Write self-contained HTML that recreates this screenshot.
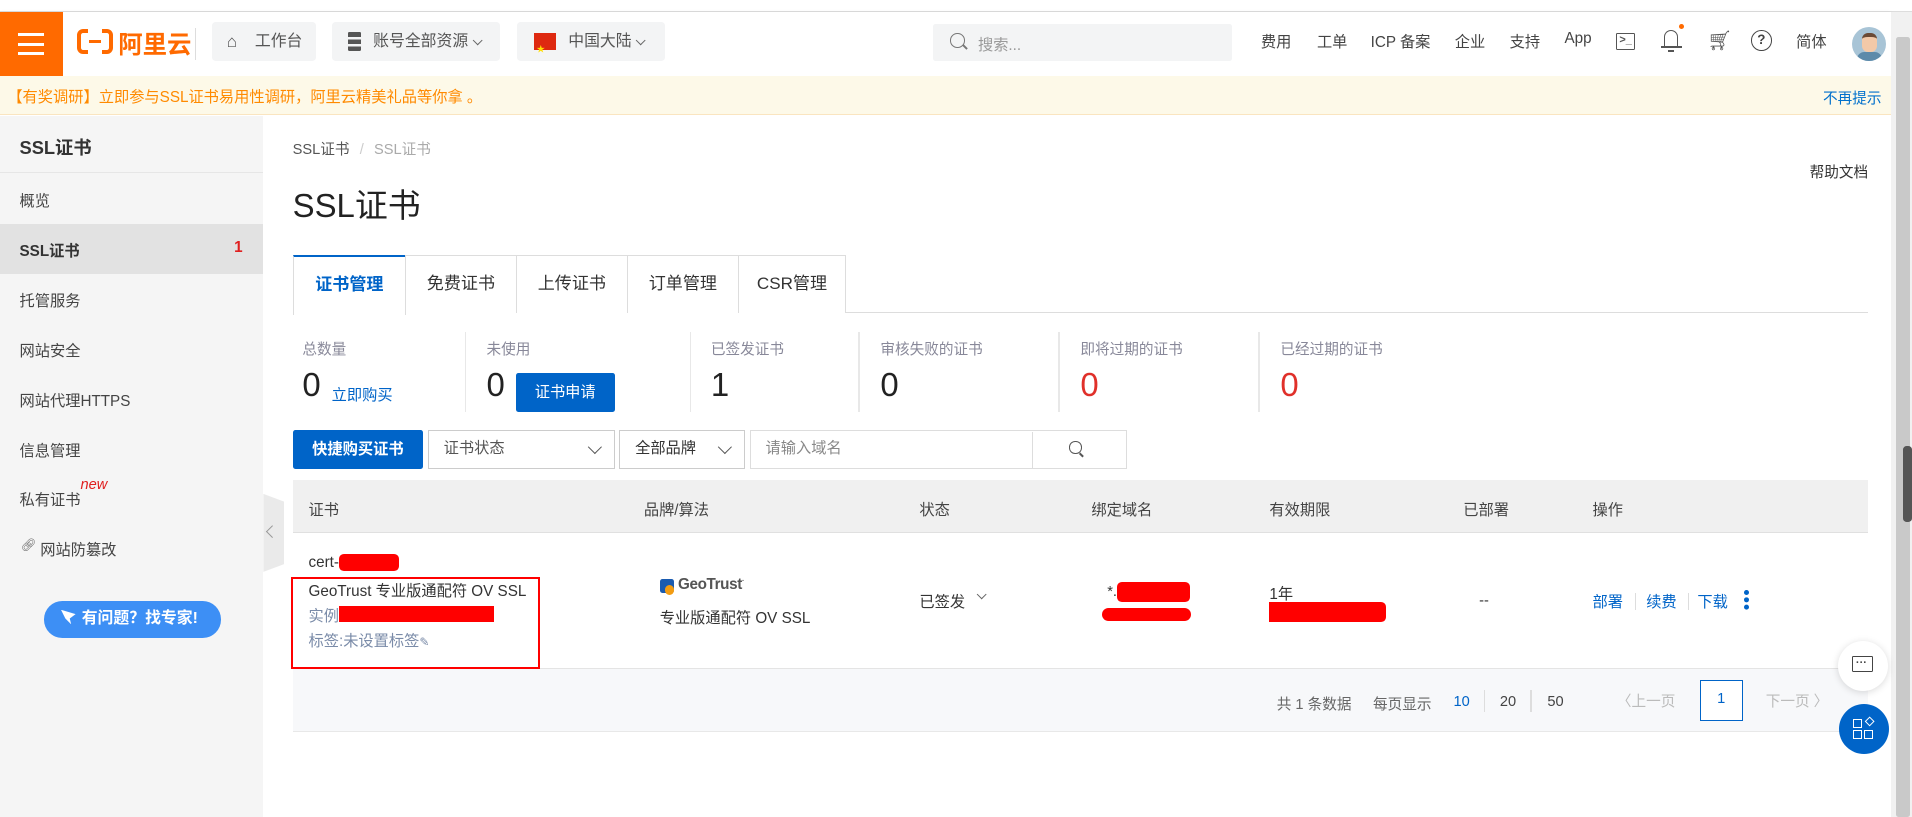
<!DOCTYPE html>
<html><head><meta charset="utf-8"><style>
*{margin:0;padding:0;box-sizing:border-box}
html,body{width:1912px;height:817px;overflow:hidden;background:#fff}
#r{position:relative;width:1568px;height:670px;zoom:1.2194;font-family:"Liberation Sans","Noto Sans CJK SC",sans-serif;color:#333;font-size:12px}
.a{position:absolute;white-space:nowrap}
.hb{position:absolute;top:18px;height:32px;background:#f3f4f5;border-radius:3px;font-size:13px;color:#555;line-height:32px}
.nav{position:absolute;top:25px;font-size:12.5px;color:#444}
.si{position:absolute;left:16px;font-size:12.5px;color:#444}
.tab{position:absolute;top:209px;height:48px;border:1px solid #ddd;border-bottom:none;font-size:14px;line-height:46px;text-align:center;color:#333;background:#fff}
.sl{position:absolute;top:277px;font-size:12px;color:#889}
.sn{position:absolute;top:300px;font-size:27px;color:#222}
.dv{position:absolute;top:272px;width:1px;height:66px;background:#e8e8e8}
.th{position:absolute;top:408px;font-size:12.5px;color:#444}
.red{position:absolute;background:#f00;border-radius:4px}
.sel{position:absolute;top:353px;height:32px;border:1px solid #ccc;font-size:12.5px;line-height:30px;color:#555;padding-left:12px}
.chev{position:absolute;width:8px;height:8px;border-right:1.3px solid #555;border-bottom:1.3px solid #555;transform:rotate(45deg)}
.chs{position:absolute;width:6px;height:6px;border-right:1.2px solid #666;border-bottom:1.2px solid #666;transform:rotate(45deg)}
</style></head><body><div id="r">
<div class="a" style="left:0;top:0;width:1568px;height:10px;background:#fff;border-bottom:1px solid #ddd"></div>
<div class="a" style="left:0;top:10px;width:1551px;height:52px;background:#fff;box-shadow:0 1px 3px rgba(0,0,0,.1)"></div>
<div class="a" style="left:0;top:10px;width:52px;height:52px;background:#ff6a00">
 <div class="a" style="left:15px;top:17px;width:21px;height:2.5px;background:#fff"></div>
 <div class="a" style="left:15px;top:25px;width:21px;height:2.5px;background:#fff"></div>
 <div class="a" style="left:15px;top:33px;width:21px;height:2.5px;background:#fff"></div>
</div>
<div class="a" style="left:63px;top:24px;width:30px;height:20px;border:4px solid #ff6a00;border-radius:5px"></div>
<div class="a" style="left:72px;top:22px;width:12px;height:24px;background:#fff"></div>
<div class="a" style="left:73px;top:32.5px;width:10px;height:3px;background:#ff6a00"></div>
<div class="a" style="left:97px;top:21px;font-size:20px;font-weight:bold;color:#ff6a00">阿里云</div>
<div class="a" style="left:160px;top:23px;width:1px;height:26px;background:#ddd"></div>
<div class="hb" style="left:174px;width:85px"><span style="position:absolute;left:12px;font-size:14px">⌂</span><span style="position:absolute;left:35px">工作台</span></div>
<div class="hb" style="left:272px;width:138px"><span style="position:absolute;left:13px;top:8px;width:11px;height:16px;background:repeating-linear-gradient(#555 0 4px,#f3f4f5 4px 6px);border-radius:1px"></span><span style="position:absolute;left:34px">账号全部资源</span><span class="chs" style="left:117px;top:12px"></span></div>
<div class="hb" style="left:424px;width:121px"><span style="position:absolute;left:14px;top:9px;width:18px;height:14px;background:#de2910"></span><span style="position:absolute;left:16px;top:7px;color:#ffde00;font-size:7px">★</span><span style="position:absolute;left:42px">中国大陆</span><span class="chs" style="left:98px;top:12px"></span></div>
<div class="a" style="left:765px;top:20px;width:245px;height:30px;background:#f3f4f5;border-radius:2px"></div>
<div class="a" style="left:779px;top:27px;width:12px;height:12px;border:1.5px solid #777;border-radius:50%"></div>
<div class="a" style="left:789px;top:38px;width:5px;height:1.5px;background:#777;transform:rotate(45deg)"></div>
<div class="a" style="left:802px;top:27px;font-size:12.5px;color:#999">搜索...</div>
<div class="nav" style="left:1034px">费用</div>
<div class="nav" style="left:1080px">工单</div>
<div class="nav" style="left:1124px">ICP 备案</div>
<div class="nav" style="left:1193px">企业</div>
<div class="nav" style="left:1238px">支持</div>
<div class="nav" style="left:1283px">App</div>
<div class="a" style="left:1325px;top:27px;width:16px;height:14px;border:1.5px solid #555;border-radius:1px"></div>
<div class="a" style="left:1328px;top:28px;font-size:9px;color:#555;font-weight:bold">&gt;_</div>
<div class="a" style="left:1365px;top:25px;width:11px;height:14px;border:1.5px solid #555;border-bottom:none;border-radius:6px 6px 0 0"></div>
<div class="a" style="left:1362px;top:38px;width:17px;height:1.5px;background:#555"></div>
<div class="a" style="left:1368px;top:41px;width:5px;height:2px;background:#555"></div>
<div class="a" style="left:1377px;top:20px;width:4px;height:4px;border-radius:50%;background:#ff6a00"></div>
<div class="a" style="left:1400px;top:24px;font-size:16px;color:#555">🛒︎</div>
<div class="a" style="left:1436px;top:25px;width:17px;height:17px;border:1.6px solid #444;border-radius:50%;text-align:center;font-size:11px;line-height:14px;font-weight:bold;color:#444">?</div>
<div class="nav" style="left:1473px">简体</div>
<div class="a" style="left:1519px;top:22px;width:28px;height:28px;border-radius:50%;background:#a8c4d6;overflow:hidden"><div class="a" style="left:8px;top:5px;width:12px;height:16px;background:#f3c9a8;border-radius:5px;border-top:4px solid #6b4a35"></div><div class="a" style="left:4px;top:21px;width:20px;height:8px;background:#5c8aaa;border-radius:6px 6px 0 0"></div></div>
<div class="a" style="left:0;top:62px;width:1551px;height:32px;background:#fdf9e8;border-bottom:1px solid #fae5c0"></div>
<div class="a" style="left:6px;top:70px;font-size:12.5px;color:#ff8a00">【有奖调研】立即参与SSL证书易用性调研，阿里云精美礼品等你拿 。</div>
<div class="a" style="left:1495px;top:71px;font-size:12px;color:#0070cc">不再提示</div>
<div class="a" style="left:1551px;top:10px;width:17px;height:660px;background:#f1f1f1"></div>
<div class="a" style="left:1555px;top:30px;width:11px;height:640px;background:#c9c9c9;border-radius:2px"></div>
<div class="a" style="left:1561px;top:366px;width:7px;height:62px;background:#555;border-radius:3px"></div>
<div class="a" style="left:0;top:95px;width:216px;height:575px;background:#f5f5f5"></div>
<div class="a" style="left:16px;top:110px;font-size:15px;font-weight:bold;color:#333">SSL证书</div>
<div class="a" style="left:0;top:141px;width:216px;height:1px;background:#e6e6e6"></div>
<div class="si" style="top:155px">概览</div>
<div class="a" style="left:0;top:184px;width:216px;height:41px;background:#e2e2e2"></div>
<div class="si" style="top:196px;font-weight:bold;color:#333">SSL证书</div>
<div class="a" style="left:192px;top:196px;color:#e02020;font-weight:bold;font-size:12.5px">1</div>
<div class="si" style="top:237px">托管服务</div>
<div class="si" style="top:278px">网站安全</div>
<div class="si" style="top:319px">网站代理HTTPS</div>
<div class="si" style="top:360px">信息管理</div>
<div class="si" style="top:400px">私有证书</div>
<div class="a" style="left:66px;top:391px;font-size:12px;color:#e02020;font-style:italic">new</div>
<div class="si" style="top:441px;font-size:10px;left:17px;color:#666">🔗︎</div>
<div class="si" style="top:441px;left:33px">网站防篡改</div>
<div class="a" style="left:36px;top:493px;width:145px;height:30px;border-radius:15px;background:#3d8ff5;color:#fff;font-size:13px;line-height:30px;padding-left:31px;font-weight:bold">有问题？找专家!</div>
<div class="a" style="left:50px;top:500px;width:12px;height:12px;background:#fff;clip-path:polygon(0 0,100% 30%,60% 60%,70% 100%,30% 60%)"></div>
<div class="a" style="left:216px;top:405px;width:17px;height:64px;background:#eaeaea;clip-path:polygon(0 0,100% 10%,100% 90%,0 100%)"></div>
<div class="a" style="left:220px;top:432px;width:7px;height:7px;border-left:1.3px solid #999;border-bottom:1.3px solid #999;transform:rotate(45deg)"></div>
<div class="a" style="left:240px;top:113px;font-size:12px;color:#555">SSL证书 <span style="color:#ccc;margin:0 5px">/</span> <span style="color:#aaa">SSL证书</span></div>
<div class="a" style="left:1484px;top:132px;font-size:12px;color:#333">帮助文档</div>
<div class="a" style="left:240px;top:148px;font-size:27px;color:#222">SSL证书</div>
<div class="a" style="left:240px;top:256px;width:1292px;height:1px;background:#ddd"></div>
<div class="tab" style="left:240px;width:93px;border-top:2px solid #0064c8;color:#0064c8;font-weight:bold;height:49px">证书管理</div>
<div class="tab" style="left:332px;width:92px">免费证书</div>
<div class="tab" style="left:423px;width:92px">上传证书</div>
<div class="tab" style="left:514px;width:92px">订单管理</div>
<div class="tab" style="left:605px;width:89px">CSR管理</div>
<div class="sl" style="left:248px">总数量</div><div class="sn" style="left:248px">0</div>
<div class="a" style="left:272px;top:314px;font-size:12.5px;color:#0064c8">立即购买</div>
<div class="dv" style="left:381px"></div>
<div class="sl" style="left:399px">未使用</div><div class="sn" style="left:399px">0</div>
<div class="a" style="left:423px;top:306px;width:81px;height:32px;background:#0064c8;border-radius:2px;color:#fff;font-size:12.5px;line-height:32px;text-align:center">证书申请</div>
<div class="dv" style="left:566px"></div>
<div class="sl" style="left:583px">已签发证书</div><div class="sn" style="left:583px">1</div>
<div class="dv" style="left:704px"></div>
<div class="sl" style="left:722px">审核失败的证书</div><div class="sn" style="left:722px">0</div>
<div class="dv" style="left:868px"></div>
<div class="sl" style="left:886px">即将过期的证书</div><div class="sn" style="left:886px;color:#e0302a">0</div>
<div class="dv" style="left:1032px"></div>
<div class="sl" style="left:1050px">已经过期的证书</div><div class="sn" style="left:1050px;color:#e0302a">0</div>
<div class="a" style="left:240px;top:353px;width:107px;height:32px;background:#0064c8;border-radius:2px;color:#fff;font-size:12.5px;line-height:32px;text-align:center;font-weight:bold">快捷购买证书</div>
<div class="sel" style="left:351px;width:153px">证书状态<span class="chev" style="left:132px;top:9px"></span></div>
<div class="sel" style="left:508px;width:103px;color:#333">全部品牌<span class="chev" style="left:82px;top:9px"></span></div>
<div class="sel" style="left:615px;width:309px;border-color:#ddd;color:#888">请输入域名</div>
<div class="a" style="left:846px;top:354px;width:1px;height:30px;background:#ddd"></div>
<div class="a" style="left:877px;top:362px;width:10px;height:10px;border:1.4px solid #555;border-radius:50%"></div>
<div class="a" style="left:885px;top:372px;width:4px;height:1.4px;background:#555;transform:rotate(45deg)"></div>
<div class="a" style="left:240px;top:394px;width:1292px;height:43px;background:#f0f0f0;border-bottom:1px solid #e0e0e0"></div>
<div class="th" style="left:253px">证书</div>
<div class="th" style="left:528px">品牌/算法</div>
<div class="th" style="left:754px">状态</div>
<div class="th" style="left:895px">绑定域名</div>
<div class="th" style="left:1041px">有效期限</div>
<div class="th" style="left:1200px">已部署</div>
<div class="th" style="left:1306px">操作</div>
<div class="a" style="left:240px;top:548px;width:1292px;height:52px;background:#f7f8fa;border-top:1px solid #e4e4e4;border-bottom:1px solid #e8e8e8"></div>
<div class="a" style="left:253px;top:454px;font-size:12.5px;color:#333">cert-</div>
<div class="red" style="left:278px;top:454px;width:49px;height:14px"></div>
<div class="a" style="left:253px;top:475px;font-size:12.5px;color:#333">GeoTrust 专业版通配符 OV SSL</div>
<div class="a" style="left:253px;top:495px;font-size:12.5px;color:#7a8ba8">实例</div>
<div class="a" style="left:278px;top:497px;width:127px;height:13px;background:#f00"></div>
<div class="a" style="left:253px;top:516px;font-size:12.5px;color:#7a8ba8">标签:未设置标签<span style="font-size:10px">✎</span></div>
<div class="a" style="left:239px;top:473px;width:204px;height:76px;border:2px solid #f00"></div>
<div class="a" style="left:541px;top:475px;width:12px;height:11px;background:#1a5bb0;border-radius:2px"></div>
<div class="a" style="left:545px;top:480px;width:8px;height:8px;border-radius:50%;background:#f39c12"></div>
<div class="a" style="left:556px;top:472px;font-size:12.5px;color:#555;font-weight:bold;letter-spacing:-.3px">GeoTrust<span style="font-size:6px;vertical-align:top">·</span></div>
<div class="a" style="left:541px;top:497px;font-size:12.5px;color:#333">专业版通配符 OV SSL</div>
<div class="a" style="left:754px;top:484px;font-size:12.5px;color:#333">已签发</div>
<div class="chev" style="left:802px;top:485px;width:6px;height:6px;border-color:#666"></div>
<div class="a" style="left:908px;top:479px;font-size:12px">*.</div>
<div class="red" style="left:916px;top:477px;width:60px;height:17px"></div>
<div class="red" style="left:904px;top:499px;width:73px;height:10px;border-radius:6px"></div>
<div class="a" style="left:1041px;top:477px;font-size:12.5px;color:#333">1年</div>
<div class="red" style="left:1041px;top:494px;width:96px;height:16px;border-radius:0 4px 4px 0"></div>
<div class="a" style="left:1213px;top:486px;font-size:12px;color:#333">--</div>
<div class="a" style="left:1306px;top:484px;font-size:12.5px;color:#0064c8">部署</div>
<div class="a" style="left:1341px;top:486px;width:1px;height:14px;background:#ddd"></div>
<div class="a" style="left:1350px;top:484px;font-size:12.5px;color:#0064c8">续费</div>
<div class="a" style="left:1384px;top:486px;width:1px;height:14px;background:#ddd"></div>
<div class="a" style="left:1392px;top:484px;font-size:12.5px;color:#0064c8">下载</div>
<div class="a" style="left:1430px;top:484px;width:4px;height:4px;border-radius:50%;background:#0064c8;box-shadow:0 6px 0 #0064c8,0 12px 0 #0064c8"></div>
<div class="a" style="left:1047px;top:568px;font-size:12px;color:#666">共 1 条数据</div>
<div class="a" style="left:1126px;top:568px;font-size:12px;color:#666">每页显示</div>
<div class="a" style="left:1192px;top:569px;font-size:12px;color:#0064c8">10</div>
<div class="a" style="left:1217px;top:566px;width:1px;height:18px;background:#ddd"></div>
<div class="a" style="left:1230px;top:569px;font-size:12px;color:#444">20</div>
<div class="a" style="left:1255px;top:566px;width:1px;height:18px;background:#ddd"></div>
<div class="a" style="left:1269px;top:569px;font-size:12px;color:#444">50</div>
<div class="a" style="left:1326px;top:566px;font-size:12px;color:#bbb">〈上一页</div>
<div class="a" style="left:1394px;top:558px;width:35px;height:33px;border:1px solid #0064c8;background:#fff;color:#0064c8;text-align:center;line-height:31px;font-size:12px">1</div>
<div class="a" style="left:1448px;top:566px;font-size:12px;color:#bbb">下一页 〉</div>
<div class="a" style="left:1507px;top:526px;width:41px;height:41px;border-radius:50%;background:#fff;box-shadow:0 1px 6px rgba(0,0,0,.15)"></div>
<div class="a" style="left:1519px;top:538px;width:17px;height:13px;border:1.5px solid #444;border-radius:1px"></div>
<div class="a" style="left:1522px;top:539px;font-size:9px;color:#444;font-weight:bold">···</div>
<div class="a" style="left:1508px;top:577px;width:41px;height:41px;border-radius:50%;background:#0064c8"></div>
<div class="a" style="left:1520px;top:590px;width:7px;height:7px;border:1.4px solid #fff"></div>
<div class="a" style="left:1520px;top:599px;width:7px;height:7px;border:1.4px solid #fff"></div>
<div class="a" style="left:1529px;top:599px;width:7px;height:7px;border:1.4px solid #fff"></div>
<div class="a" style="left:1530px;top:589px;width:6px;height:6px;border:1.4px solid #fff;transform:rotate(45deg)"></div>
</div></body></html>
